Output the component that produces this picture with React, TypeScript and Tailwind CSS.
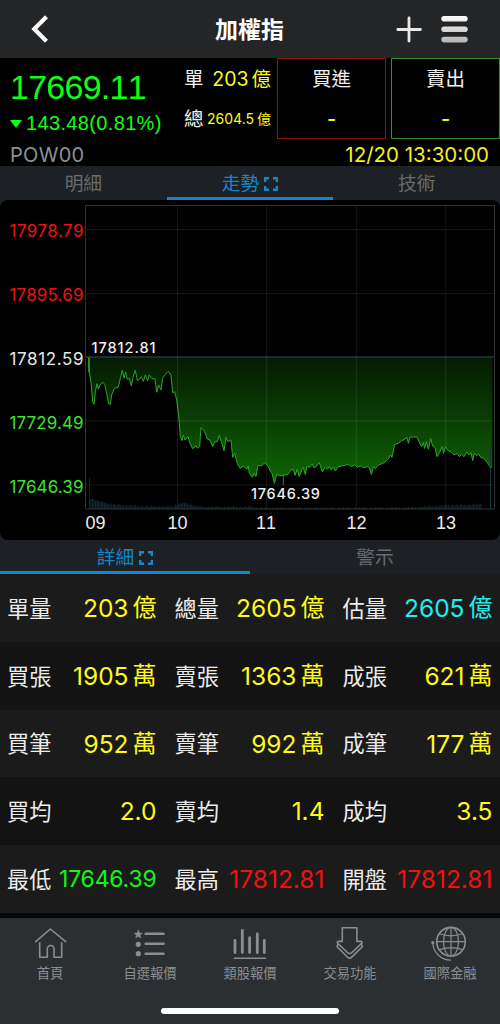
import type { ReactNode } from 'react';
import clsx from 'clsx';

type Tone = 'yellow' | 'cyan' | 'green' | 'red';

interface Cell {
  label: string;
  value: string;
  unit?: string;
  tone: Tone;
}

const TONES: Record<Tone, string> = {
  yellow: 'text-[24.5px] text-[#fdfa1c]',
  cyan: 'text-[24.5px] text-[#1feef0]',
  green: 'text-[23px] tracking-[-0.2px] text-[#12f51b]',
  red: 'text-[24.5px] text-[#f0110f]',
};

const ROWS: Cell[][] = [
  [
    { label: '單量', value: '203', unit: '億', tone: 'yellow' },
    { label: '總量', value: '2605', unit: '億', tone: 'yellow' },
    { label: '估量', value: '2605', unit: '億', tone: 'cyan' },
  ],
  [
    { label: '買張', value: '1905', unit: '萬', tone: 'yellow' },
    { label: '賣張', value: '1363', unit: '萬', tone: 'yellow' },
    { label: '成張', value: '621', unit: '萬', tone: 'yellow' },
  ],
  [
    { label: '買筆', value: '952', unit: '萬', tone: 'yellow' },
    { label: '賣筆', value: '992', unit: '萬', tone: 'yellow' },
    { label: '成筆', value: '177', unit: '萬', tone: 'yellow' },
  ],
  [
    { label: '買均', value: '2.0', tone: 'yellow' },
    { label: '賣均', value: '1.4', tone: 'yellow' },
    { label: '成均', value: '3.5', tone: 'yellow' },
  ],
  [
    { label: '最低', value: '17646.39', tone: 'green' },
    { label: '最高', value: '17812.81', tone: 'red' },
    { label: '開盤', value: '17812.81', tone: 'red' },
  ],
];

// intraday price line, in thirds of a pixel from the plot origin
const PRICE =
  '25,52 28,95 33,125 38,185 42,193 46,155 51,131 55,148 60,135 69,127 74,133 80,160 86,192 91,193 95,165 103,145 115,142 121,115 127,90 132,115 137,97 142,118 148,115 154,138 160,108 166,91 172,122 178,118 184,110 190,124 196,105 203,122 208,105 214,115 225,117 230,157 236,135 243,150 248,115 256,103 265,94 273,105 278,158 284,155 290,180 296,225 301,290 306,302 310,285 315,300 324,290 330,310 338,326 348,318 353,325 359,320 363,263 371,270 376,280 382,297 390,300 398,320 405,305 412,305 418,286 425,308 432,332 438,292 444,305 453,300 458,352 464,340 472,370 480,385 490,378 500,388 505,378 508,400 517,412 522,400 528,410 534,376 545,378 554,368 564,378 570,392 576,400 583,430 590,403 600,408 610,405 622,405 628,397 633,390 640,388 645,406 652,388 658,410 666,388 670,382 676,404 681,378 690,382 696,371 702,384 710,378 718,368 727,396 735,382 742,388 748,380 754,390 760,381 766,393 775,380 785,378 795,376 805,373 815,380 824,374 832,382 842,377 852,383 862,380 868,382 874,404 880,380 886,386 895,375 905,372 915,366 925,357 931,345 936,352 944,314 955,310 965,302 975,297 981,292 985,310 990,292 1000,291 1012,291 1018,308 1025,320 1030,308 1034,325 1039,305 1045,328 1052,296 1058,318 1064,320 1071,350 1080,335 1086,320 1091,340 1096,320 1105,332 1115,337 1122,345 1132,340 1138,350 1145,343 1152,350 1160,336 1168,345 1173,338 1178,362 1183,340 1190,347 1196,342 1202,352 1212,355 1222,368 1233,384';

const volumeAt = (i: number) => {
  const noise = ((i * 37) % 11) / 11;
  const opening = 26 * Math.exp(-i / 12);
  const closing = i > 210 ? (i - 210) * 0.2 : 0;
  const ten = 11 * Math.exp(-(((i - 63) / 6) ** 2));
  const rest = i < 110 ? 4 : 1;
  return opening + closing + ten + rest + noise * 6;
};

const VOLUME = Array.from({ length: 264 }, (_, i) => ({
  x: 31 + i * 4.45,
  h: volumeAt(i),
}));

const Y_LABELS = [
  { y: 31, text: '17978.79', fill: '#f0110f' },
  { y: 95, text: '17895.69', fill: '#f0110f' },
  { y: 158.5, text: '17812.59', fill: '#e8e8e8' },
  { y: 222.5, text: '17729.49', fill: '#3ae52a' },
  { y: 286.5, text: '17646.39', fill: '#3ae52a' },
];

const X_LABELS = [
  { x: 95.5, text: '09' },
  { x: 177.5, text: '10' },
  { x: 266, text: '11' },
  { x: 356.5, text: '12' },
  { x: 446, text: '13' },
];

function Header() {
  return (
    <header className="flex h-[58px] shrink-0 items-center bg-[#232527] pl-[30px] pr-[31px]">
      <svg className="h-[30px] w-[22px]" viewBox="0 0 22 30" fill="none" stroke="#fff" strokeWidth="4.2">
        <path d="M16.5 2.8 4.3 15l12.2 12.2" />
      </svg>
      <h1 className="ml-[163px] mt-[2px] w-[70px] text-[23px] font-bold leading-[30px] text-white">加權指</h1>
      <svg className="ml-auto h-[30px] w-[28px]" viewBox="0 0 28 30" stroke="#e9e9e9" strokeWidth="2.8" strokeLinecap="round">
        <path d="M13 4v23M1.8 15.5h22.6" />
      </svg>
      <svg className="ml-[16px] h-[30px] w-[29px]" viewBox="0 0 29 30">
        <defs>
          <linearGradient id="menu" gradientUnits="userSpaceOnUse" x1="0" y1="1" x2="0" y2="29">
            <stop offset="0" stopColor="#fff" />
            <stop offset="1" stopColor="#b4b4b4" />
          </linearGradient>
        </defs>
        <rect x="1.3" y="2" width="26.4" height="5.6" rx="2.8" fill="url(#menu)" />
        <rect x="1.3" y="12.4" width="26.4" height="5.6" rx="2.8" fill="url(#menu)" />
        <rect x="1.3" y="22.8" width="26.4" height="5.6" rx="2.8" fill="url(#menu)" />
      </svg>
    </header>
  );
}

function QuoteBox({ label, className }: { label: string; className: string }) {
  return (
    <div className={clsx('flex h-[81px] w-[109px] flex-col items-center border', className)}>
      <span className="mt-[5px] text-[19.5px] leading-[30px] text-[#f0f0f0]">{label}</span>
      <span className="mt-[11px] text-[20px] font-medium leading-[28px] text-[#fdfa1c]">-</span>
    </div>
  );
}

function Quote() {
  return (
    <section className="flex h-[108px] shrink-0 flex-col bg-black">
      <div className="flex h-[81px]">
        <div className="w-[184px] pl-[10px] font-['Liberation_Sans',sans-serif] text-[#0dff12] [font-kerning:none]">
          <div className="mt-[9px] text-[34px] leading-[40px] tracking-[-0.75px]">17669.11</div>
          <div className="flex items-center text-[20px] leading-[33px] tracking-[0.35px]">
            <svg className="mr-[4px] h-[8px] w-[12px]" viewBox="0 0 12 8" fill="currentColor">
              <path d="M0 0h12L6 8z" />
            </svg>
            143.48(0.81%)
          </div>
        </div>
        <div className="flex w-[87px] flex-col text-[#fdfa1c]">
          <div className="mt-[6px] flex items-center justify-between leading-[30px]">
            <span className="text-[19.5px] text-[#f0f0f0]">單</span>
            <span className="text-[19.5px]">
              203<span className="ml-[3px]">億</span>
            </span>
          </div>
          <div className="mt-[10px] flex items-center justify-between leading-[30px]">
            <span className="text-[19.5px] text-[#f0f0f0]">總</span>
            <span className="text-[14px]">
              2604.5<span className="ml-[3px]">億</span>
            </span>
          </div>
        </div>
        <div className="ml-[6px] flex gap-[5px]">
          <QuoteBox label="買進" className="border-[#8a1512]" />
          <QuoteBox label="賣出" className="border-[#348c34]" />
        </div>
      </div>
      <div className="flex h-[27px] items-center justify-between pl-[10px] pr-[11px] pt-[5px] text-[20px] leading-[26px]">
        <span className="tracking-[0.3px] text-[#8b9296]">POW00</span>
        <span className="text-[20.5px] text-[#f3ef1d]">12/20 13:30:00</span>
      </div>
    </section>
  );
}

function Tab({ label, active }: { label: string; active?: boolean }) {
  return (
    <button
      type="button"
      className={clsx(
        'flex h-full flex-1 items-center justify-center border-b-[3px] pt-[4px] text-[18.7px] leading-[28px]',
        active ? 'border-[#1786c9] text-[#1786c9]' : 'border-transparent text-[#686c6e]',
      )}
    >
      {label}
      {active && (
        <svg className="ml-[5px] h-[14px] w-[14px]" viewBox="0 0 14 14" fill="none" stroke="currentColor" strokeWidth="2.4">
          <path d="M1.2 5V1.2H5M9 1.2h3.8V5M12.8 9v3.8H9M5 12.8H1.2V9" />
        </svg>
      )}
    </button>
  );
}

function Chart() {
  return (
    <section className="h-[340px] shrink-0 overflow-hidden rounded-[8px] bg-black">
      <svg className="block h-[340px] w-[500px]" viewBox="0 0 500 340" fontFamily="Inter, sans-serif">
        <defs>
          <linearGradient id="fall" gradientUnits="userSpaceOnUse" x1="0" y1="52" x2="0" y2="430">
            <stop offset="0" stopColor="#051b02" />
            <stop offset="0.5" stopColor="#0a3f03" />
            <stop offset="1" stopColor="#0f6404" />
          </linearGradient>
        </defs>
        <g transform="translate(80 140) scale(0.33333)">
          {VOLUME.map((v) => (
            <rect key={v.x} x={v.x} y={507 - v.h} width="3.8" height={v.h} fill="#10252f" />
          ))}
          <rect x="27" y="413" width="3" height="94" fill="#10252f" />
          <polygon points={`25,52 ${PRICE} 1237,384 1237,52`} fill="url(#fall)" />
          <rect x="1230" y="325" width="3" height="182" fill="#12373a" />
          <polyline points={PRICE} fill="none" stroke="#2aa827" strokeWidth="3" strokeLinejoin="round" />
          <path d="M27 52v45" stroke="#2c9a2b" strokeWidth="5" />
          <path d="M610 405v30" stroke="#2aa827" strokeWidth="2.5" />
        </g>
        <g stroke="#fff" strokeOpacity="0.09">
          <path d="M86 29.5h409M86 93.5h409M86 221h409M86 285h409" />
          <path d="M177.5 5v304M266.7 5v304M356.3 5v304M445.8 5v304" />
        </g>
        <path d="M86 157h409" stroke="#2b5558" />
        <rect x="85.5" y="5.5" width="409" height="303.5" fill="none" stroke="#303030" />
        {Y_LABELS.map((l) => (
          <text key={l.text} x="83.5" y={l.y} dy="6" fontSize="17" fill={l.fill} textAnchor="end" textLength="74">
            {l.text}
          </text>
        ))}
        {X_LABELS.map((l) => (
          <text
            key={l.text}
            x={l.x}
            y="329"
            fontSize="18"
            fill="#ececec"
            textAnchor="middle"
            fontFamily="'Liberation Sans', sans-serif"
            className="[font-kerning:none]"
          >
            {l.text}
          </text>
        ))}
        <g fontSize="14.5" fontWeight="500" fill="#f0f0f0">
          <text x="91.5" y="153" textLength="64">17812.81</text>
          <text x="251" y="298.5" textLength="69">17646.39</text>
        </g>
      </svg>
    </section>
  );
}

function DetailCell({ label, value, unit, tone }: Cell) {
  return (
    <div className="flex items-center justify-between">
      <span className="text-[22.2px] text-[#ececec]">{label}</span>
      <span className={clsx('flex items-center whitespace-nowrap', TONES[tone])}>
        {value}
        {unit && <span className="ml-[4px] text-[24px]">{unit}</span>}
      </span>
    </div>
  );
}

function NavItem({ label, children }: { label: string; children: ReactNode }) {
  return (
    <a className="flex flex-1 flex-col items-center text-[#8b8d8e]">
      <svg
        className="mt-[7px] h-[38px] w-[40px]"
        viewBox="0 0 40 38"
        fill="none"
        stroke="currentColor"
        strokeWidth="1.6"
        strokeLinecap="round"
        strokeLinejoin="round"
      >
        {children}
      </svg>
      <span className="text-[13.3px] leading-[20px]">{label}</span>
    </a>
  );
}

function BottomNav() {
  return (
    <nav className="flex h-[106px] shrink-0 flex-col bg-[#2b2f32]">
      <div className="flex">
        <NavItem label="首頁">
          <path d="M5.7 16.7 20.3 4l15.4 12.7" />
          <path d="M9.7 17.7v14.6h7.6v-8.4a3.35 3.35 0 0 1 6.7 0v8.4h7.7V17.7" />
        </NavItem>
        <NavItem label="自選報價">
          <path
            d="m8.3 5 1.2 2.9 3 .2-2.3 2 .8 3-2.7-1.6L5.6 13l.8-2.9-2.3-2 3-.2z"
            fill="currentColor"
            strokeWidth="0.4"
          />
          <circle cx="8.3" cy="19.3" r="2.6" fill="currentColor" stroke="none" />
          <circle cx="8.3" cy="28.7" r="2.6" fill="currentColor" stroke="none" />
          <path d="M15.6 8.8h18M15.6 18.8h18M15.6 28.7h18" strokeWidth="2.4" />
        </NavItem>
        <NavItem label="類股報價">
          <path d="M5 15.5v12M12.3 5.3v22.2M19.6 12.7v14.8M27.3 9v18.5M34.3 15.5v12" strokeWidth="2.8" />
          <path d="M4.3 33.3h31" />
        </NavItem>
        <NavItem label="交易功能">
          <path d="M12.3 2.8h14.6v13.6h4.3q1.6.5.6 1.7L22 27.5q-2.3 2.2-4.6 0l-9.8-9.4q-1-1.2.6-1.7h4.1z" />
          <path d="M8.6 19.3q-2.6 1.4-1 3l10 9.9q2.1 2 4.2 0l10-9.9q1.6-1.6-1-3" />
        </NavItem>
        <NavItem label="國際金融">
          <circle cx="21" cy="16.7" r="14.3" />
          <ellipse cx="21" cy="16.7" rx="7.5" ry="14.3" strokeWidth="1.2" />
          <path d="M21 2.4V31M6.7 16.7h28.6M9.5 8.8q11.5 4 23 0M9.5 24.6q11.5-4 23 0" strokeWidth="1.2" />
          <circle cx="2.8" cy="17.5" r="1.6" fill="currentColor" stroke="none" />
          <path d="M2.8 18.5c.8 9.3 8.4 16.3 17.7 16.6" strokeWidth="1.3" />
        </NavItem>
      </div>
      <div className="mx-auto mt-[25px] h-[6px] w-[178px] rounded-full bg-white" />
    </nav>
  );
}

export default function App() {
  return (
    <div className="flex h-[1024px] w-[500px] flex-col overflow-hidden bg-[#1d2125] font-['Inter','Noto_Sans_CJK_TC',sans-serif]">
      <Header />
      <Quote />
      <div className="flex h-[34px] shrink-0">
        <Tab label="明細" />
        <Tab label="走勢" active />
        <Tab label="技術" />
      </div>
      <Chart />
      <div className="flex h-[34px] shrink-0">
        <Tab label="詳細" active />
        <Tab label="警示" />
      </div>
      <main className="flex h-[339px] shrink-0 flex-col">
        {ROWS.map((row) => (
          <div
            key={row[0].label}
            className="grid flex-1 grid-cols-[149.5px_150px_150px] gap-x-[18px] bg-[#131313] pl-[7px] pt-px odd:bg-[#1b1b1b]"
          >
            {row.map((cell) => (
              <DetailCell key={cell.label} {...cell} />
            ))}
          </div>
        ))}
      </main>
      <div className="h-[5px] shrink-0 bg-[#050607]" />
      <BottomNav />
    </div>
  );
}
